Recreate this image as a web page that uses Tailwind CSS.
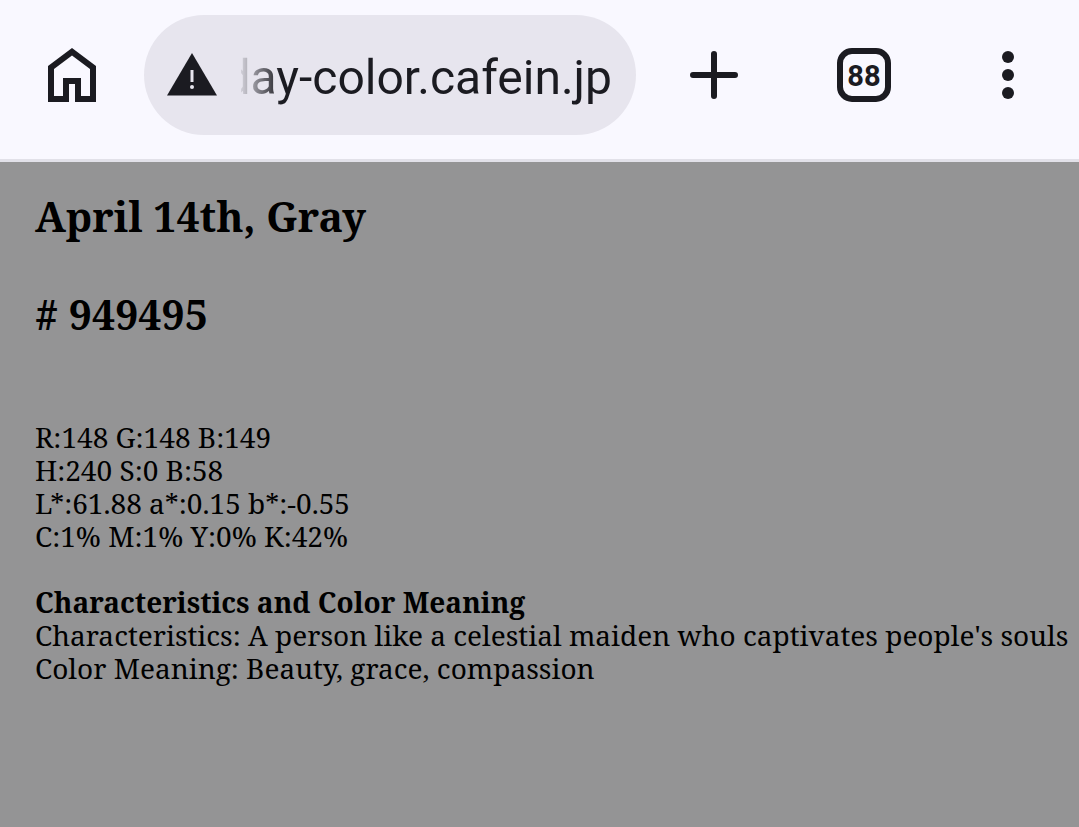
<!DOCTYPE html>
<html lang="en">
<head>
<meta charset="utf-8">
<meta name="viewport" content="width=device-width, initial-scale=1">
<title>April 14th, Gray</title>
<script src="https://cdn.jsdelivr.net/npm/@tailwindcss/browser@4"></script>
</head>
<body class="flex min-h-screen flex-col bg-[#949495] text-black">
<header class="flex items-center border-b-3 border-[#e2e1e9] bg-[#f9f8ff] pt-[15px] pb-6 text-[#1b1b21]">
  <button type="button" aria-label="Home" class="flex h-[120px] w-36 shrink-0 items-center justify-center">
    <svg class="h-[54px] w-12" viewBox="0 0 48 54" fill="currentColor" aria-hidden="true"><path fill-rule="evenodd" d="M24 0 48 18V54H27V36H21V54H0V18ZM24 7.500 6 21V48H15V30H33V48H42V21Z"/></svg>
  </button>
  <div class="flex h-[120px] min-w-0 flex-1 items-center gap-6 rounded-full bg-[#e7e5ee] pr-6 pl-[23px]">
    <svg class="h-11 w-[50px] shrink-0" viewBox="0 0 50 44" aria-hidden="true"><path fill="currentColor" d="M25 0 50 42.500H0Z"/><path fill="#e7e5ee" d="M23.500 17h3v12h-3z"/><circle cx="25" cy="34" r="2" fill="#e7e5ee"/></svg>
    <input type="text" aria-label="Address" dir="rtl" value="day-color.cafein.jp" class="h-[76px] min-w-0 flex-1 bg-transparent pt-1 font-['Roboto',sans-serif] text-[48px] outline-none [mask-image:linear-gradient(to_right,rgb(0_0_0/0.1),black_40px)]">
  </div>
  <button type="button" aria-label="New tab" class="flex h-[120px] w-39 shrink-0 items-center justify-center">
    <svg class="size-12" viewBox="0 0 48 48" fill="none" stroke="currentColor" stroke-width="6" stroke-linecap="round" aria-hidden="true"><path d="M24 3V45M3 24H45"/></svg>
  </button>
  <button type="button" aria-label="88 open tabs" class="flex h-[120px] w-36 shrink-0 items-center justify-center">
    <span class="flex size-[54px] items-center justify-center rounded-[15px] border-6 border-current pt-0.5 font-['Roboto',sans-serif] text-[29px] leading-none font-bold">88</span>
  </button>
  <button type="button" aria-label="Menu" class="flex h-[120px] w-[143px] shrink-0 items-center justify-center">
    <svg class="h-12 w-3" viewBox="0 0 12 48" fill="currentColor" aria-hidden="true"><circle cx="6" cy="6" r="6"/><circle cx="6" cy="24" r="6"/><circle cx="6" cy="42" r="6"/></svg>
  </button>
</header>
<main class="px-[35px] pt-[21px] font-['Noto_Serif','Liberation_Serif',serif] text-[28px] leading-[33px]">
  <h1 class="text-[41px] leading-[66px] font-bold">April 14th, Gray</h1>
  <h2 class="mt-8 text-[41px] leading-[66px] font-bold"># 949495</h2>
  <p class="mt-[74px] whitespace-nowrap">R:148 G:148 B:149<br>H:240 S:0 B:58<br>L*:61.88 a*:0.15 b*:-0.55<br>C:1% M:1% Y:0% K:42%</p>
  <h3 class="mt-[33px] font-bold">Characteristics and Color Meaning</h3>
  <p class="whitespace-nowrap">Characteristics: A person like a celestial maiden who captivates people's souls<br>Color Meaning: Beauty, grace, compassion</p>
</main>
</body>
</html>
